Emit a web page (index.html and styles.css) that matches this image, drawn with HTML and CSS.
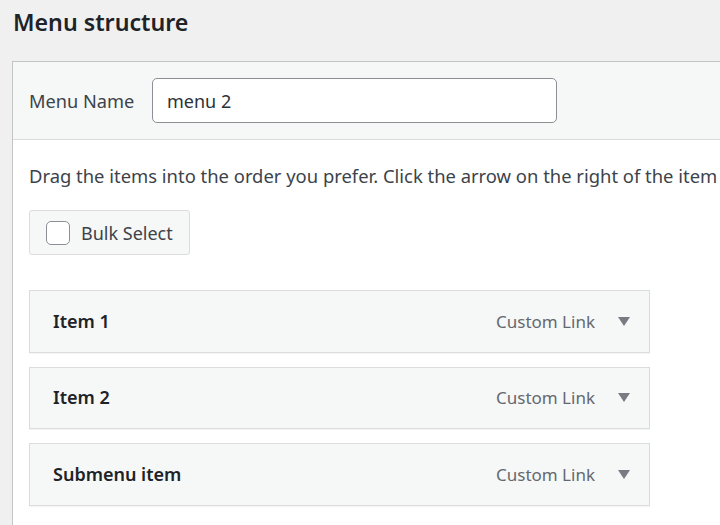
FILE: index.html
```html
<!DOCTYPE html>
<html>
<head>
	<title>Menus</title>
	<meta charset="UTF-8">
	<link rel="stylesheet" href="styles.css">
</head>
<body>
	<h2 class="title">Menu structure</h2>
	<div class="panel">
		<div class="panelHead">
			<label class="nameLabel" for="menuName">Menu Name</label>
			<input class="nameInput" id="menuName" type="text" value="menu 2">
		</div>
		<div class="panelBody">
			<p class="hint">Drag the items into the order you prefer. Click the arrow on the right of the item</p>
			<label class="bulkBtn"><span class="check"></span>Bulk Select</label>
			<ul class="items">
				<li class="item"><span class="itemTitle">Item 1</span><span class="itemType">Custom Link</span><span class="arrow"></span></li>
				<li class="item"><span class="itemTitle">Item 2</span><span class="itemType">Custom Link</span><span class="arrow"></span></li>
				<li class="item"><span class="itemTitle">Submenu item</span><span class="itemType">Custom Link</span><span class="arrow"></span></li>
			</ul>
		</div>
	</div>
</body>
</html>
```

FILE: styles.css
```css
*{
	margin: 0;
	padding: 0;
	box-sizing: border-box;
}
li{
	list-style: none;
}
html, body{
	overflow: hidden;
}
body{
	width: 720px;
	height: 525px;
	background: #f0f0f1;
	font-family: "Noto Sans", "Open Sans", sans-serif;
	font-size: 18px;
	color: #3c434a;
}
.title{
	font-size: 23.2px;
	font-weight: 600;
	color: #1d2327;
	line-height: 30px;
	padding: 7px 0 0 13px;
	height: 61px;
}
.panel{
	width: 708px;
	height: 464px;
	margin-left: 12px;
	border-top: 1px solid #c3c4c7;
	border-left: 1px solid #c3c4c7;
	background: #fff;
}
.panelHead{
	display: flex;
	align-items: center;
	height: 78px;
	padding-left: 16px;
	background: #f6f7f7;
	border-bottom: 1px solid #dcdcde;
}
.nameLabel{
	width: 123px;
	font-size: 18.2px;
}
.nameInput{
	width: 405px;
	height: 45px;
	padding: 0 14px;
	border: 1px solid #8c8f94;
	border-radius: 5px;
	background: #fff;
	font-family: inherit;
	font-size: 18px;
	color: #2c3338;
}
.panelBody{
	padding: 22px 0 0 16px;
}
.hint{
	white-space: nowrap;
	font-size: 18.42px;
	line-height: 28px;
}
.bulkBtn{
	display: flex;
	align-items: center;
	width: 161px;
	height: 45px;
	margin-top: 20px;
	padding-left: 16px;
	background: #f6f7f7;
	border: 1px solid #dcdcde;
	border-radius: 3px;
}
.check{
	width: 24px;
	height: 24px;
	margin-right: 11px;
	background: #fff;
	border: 1px solid #8c8f94;
	border-radius: 5px;
}
.items{
	margin-top: 35px;
	width: 621px;
	display: flex;
	flex-direction: column;
	gap: 14px;
}
.item{
	display: flex;
	align-items: center;
	height: 62.5px;
	padding: 0 19px 0 23px;
	background: #f6f7f7;
	border: 1px solid #dcdcde;
	box-shadow: 0 1px 1px rgba(0, 0, 0, 0.04);
}
.itemTitle{
	flex: 1;
	font-weight: 600;
	color: #1d2327;
	padding-bottom: 1px;
}
.itemType{
	font-size: 17px;
	color: #646970;
	margin-right: 23px;
}
.arrow{
	width: 0;
	height: 0;
	border-left: 6px solid transparent;
	border-right: 6px solid transparent;
	border-top: 9px solid #787c82;
}
```
